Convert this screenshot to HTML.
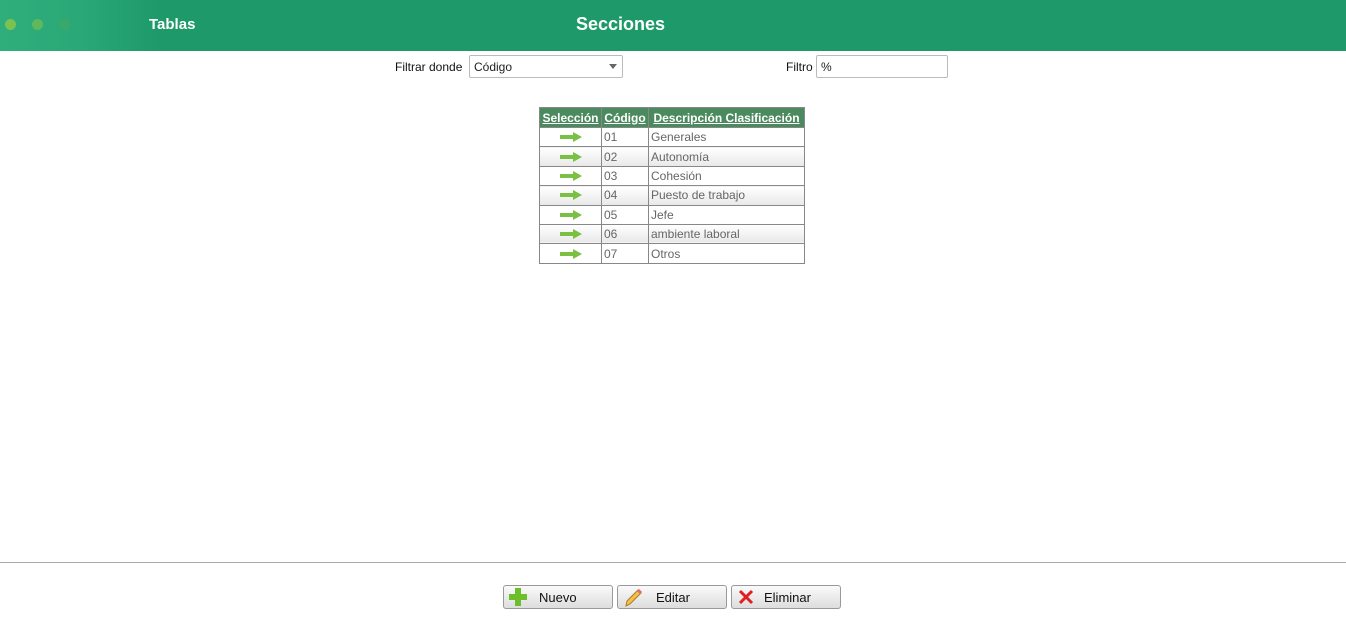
<html><head><style>
body{margin:0;width:1346px;height:639px;background:#fff;font-family:"Liberation Sans",sans-serif;position:relative;overflow:hidden}
.hdr{position:absolute;left:0;top:0;width:1346px;height:51px;background:#1e9a6a}
.glow{position:absolute;left:0;top:0;width:160px;height:51px;background:linear-gradient(90deg,#2fae7c,#2aa877 50%,#1e9a6a)}
.dot{position:absolute;top:19px;width:11px;height:11px;border-radius:50%}
.t{position:absolute;color:#fff;font-weight:bold}
.lbl{position:absolute;font-size:12px;color:#111}
.inp{position:absolute;border:1px solid #bbb;border-radius:2px;font-size:12px;color:#222;box-sizing:border-box;padding:4px 4px}
table{position:absolute;left:539px;top:107px;border-collapse:collapse;font-size:12px;color:#666}
td,th{border:1px solid #888;padding:0 2px;height:19.4px;box-sizing:border-box}
th{background:#4a8a5e;color:#fff;text-decoration:underline;font-size:12px;height:20px;white-space:nowrap}
tr:nth-child(odd) td{background:linear-gradient(#fff,#e8e8e8)}
.arr{display:block;margin:0 auto;width:22px;height:10px}
.line{position:absolute;left:0;top:562px;width:1346px;height:1px;background:#aaa}
.btn{position:absolute;top:585px;width:110px;height:24px;box-sizing:border-box;border:1px solid #999;border-radius:3px;background:linear-gradient(#fafafa,#ddd);font-size:13px;color:#111}
.btn span{position:absolute;top:4px}
.btn svg{position:absolute;left:5px;top:2px}
</style></head><body>
<div class="hdr"><div class="glow"></div>
<div class="dot" style="left:5px;background:#7cc252"></div>
<div class="dot" style="left:32px;background:#5fb85e"></div>
<div class="dot" style="left:59px;background:#3aa86a"></div>
<div class="t" style="left:149px;top:16px;font-size:15px">Tablas</div>
<div class="t" style="left:576px;top:14px;font-size:18px">Secciones</div>
</div>
<div class="lbl" style="left:395px;top:60px">Filtrar donde</div>
<div class="inp" style="left:469px;top:55px;width:154px;height:23px">Código<span style="position:absolute;right:5px;top:8px;border:4px solid transparent;border-top:5px solid #666"></span></div>
<div class="lbl" style="left:786px;top:60px">Filtro</div>
<div class="inp" style="left:816px;top:55px;width:132px;height:23px">%</div>
<table>
<tr><th style="width:62px">Selección</th><th style="width:47px">Código</th><th style="width:156px">Descripción Clasificación</th></tr>
<tr><td><svg class="arr" viewBox="0 0 22 10"><path d="M0 3h13V0l9 5-9 5V7H0z" fill="#7ac043"/></svg></td><td>01</td><td>Generales</td></tr>
<tr><td><svg class="arr" viewBox="0 0 22 10"><path d="M0 3h13V0l9 5-9 5V7H0z" fill="#7ac043"/></svg></td><td>02</td><td>Autonomía</td></tr>
<tr><td><svg class="arr" viewBox="0 0 22 10"><path d="M0 3h13V0l9 5-9 5V7H0z" fill="#7ac043"/></svg></td><td>03</td><td>Cohesión</td></tr>
<tr><td><svg class="arr" viewBox="0 0 22 10"><path d="M0 3h13V0l9 5-9 5V7H0z" fill="#7ac043"/></svg></td><td>04</td><td>Puesto de trabajo</td></tr>
<tr><td><svg class="arr" viewBox="0 0 22 10"><path d="M0 3h13V0l9 5-9 5V7H0z" fill="#7ac043"/></svg></td><td>05</td><td>Jefe</td></tr>
<tr><td><svg class="arr" viewBox="0 0 22 10"><path d="M0 3h13V0l9 5-9 5V7H0z" fill="#7ac043"/></svg></td><td>06</td><td>ambiente laboral</td></tr>
<tr><td><svg class="arr" viewBox="0 0 22 10"><path d="M0 3h13V0l9 5-9 5V7H0z" fill="#7ac043"/></svg></td><td>07</td><td>Otros</td></tr>
</table>
<div class="line"></div>
<div class="btn" style="left:503px"><svg width="18" height="18" viewBox="0 0 18 18"><path d="M6 0h6v6h6v6h-6v6H6v-6H0V6h6z" fill="#6cbf2a"/></svg><span style="left:35px">Nuevo</span></div>
<div class="btn" style="left:617px"><svg width="20" height="20" viewBox="0 0 20 20"><path d="M3 18l1-5L15 2l3 3L7 16z" fill="#f2c14e" stroke="#b07a20" stroke-width="1"/><path d="M15 2l3 3" stroke="#e07070" stroke-width="3"/></svg><span style="left:38px">Editar</span></div>
<div class="btn" style="left:731px"><svg width="18" height="18" viewBox="0 0 18 18"><path d="M3 3l12 12M15 3L3 15" stroke="#e02020" stroke-width="3"/></svg><span style="left:32px">Eliminar</span></div>
</body></html>
